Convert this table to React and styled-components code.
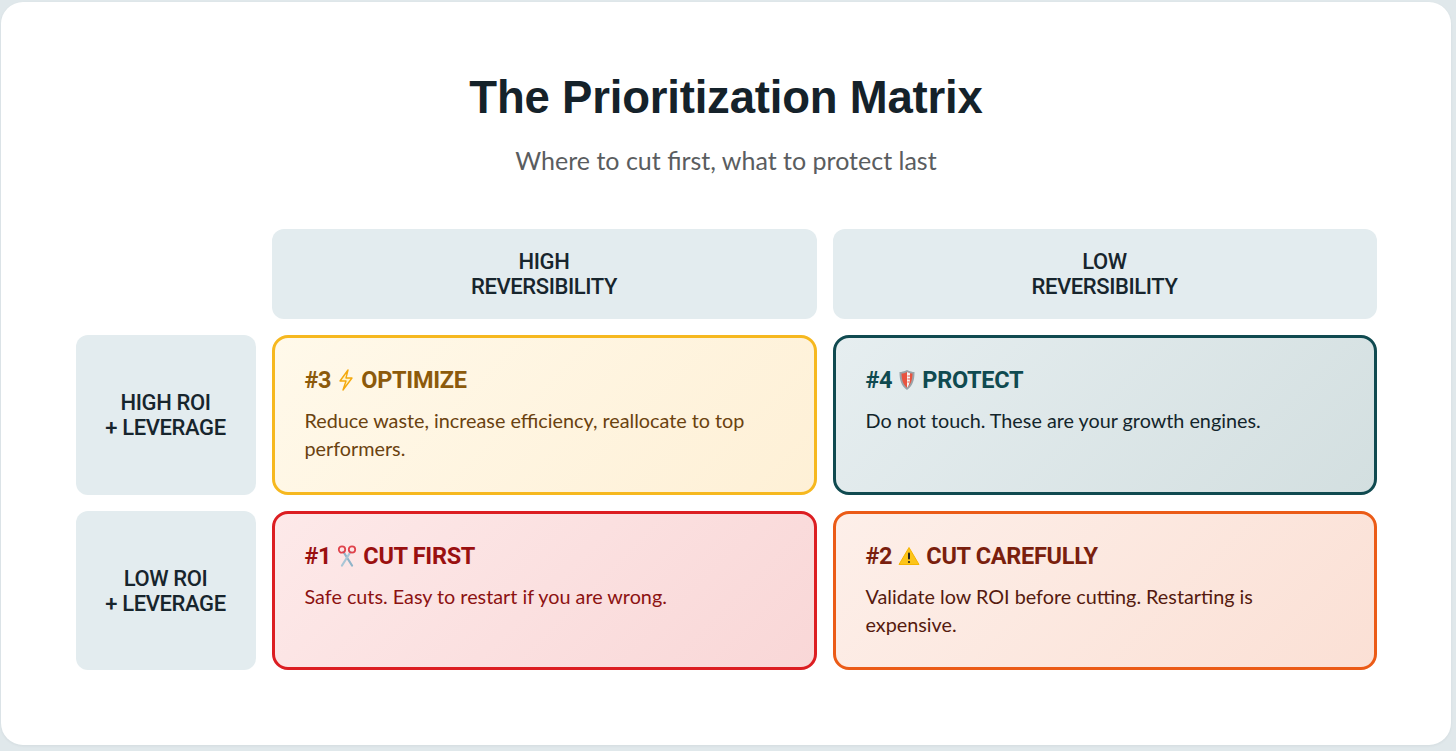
import React from "react";
import styled, { createGlobalStyle } from "styled-components";

const GlobalStyle = createGlobalStyle`
	html, body {
		margin: 0;
		padding: 0;
		background: #e0e8eb;
	}
	* {
		box-sizing: border-box;
	}
`;

const Page = styled.div`
	padding: 2px 5px 6px 1px;
	height: 751px;
`;

const Card = styled.div`
	height: 743px;
	background: #fff;
	border-radius: 22px;
	box-shadow: 0 1px 3px rgba(20, 40, 50, 0.06);
	padding-top: 69px;
	display: flex;
	flex-direction: column;
	align-items: center;
`;

const Title = styled.h1`
	margin: 0;
	font-family: "Liberation Sans", Arial, sans-serif;
	font-weight: 700;
	font-size: 45.5px;
	line-height: 54px;
	letter-spacing: -0.2px;
	color: #15222a;
`;

const Subtitle = styled.p`
	margin: 20px 0 0;
	font-family: Lato, "Open Sans", sans-serif;
	font-size: 25px;
	line-height: 30px;
	color: #5a5d60;
`;

const Matrix = styled.div`
	margin-top: 54px;
	display: grid;
	grid-template-columns: 180px 545px 544px;
	grid-template-rows: 90px 160px 159px;
	gap: 16px;
`;

const Label = styled.div`
	background: #e3ecef;
	border-radius: 12px;
	display: flex;
	align-items: center;
	justify-content: center;
	text-align: center;
	font-family: Roboto, "Liberation Sans", sans-serif;
	font-weight: 500;
	font-size: 22px;
	line-height: 25px;
	letter-spacing: -0.4px;
	color: #17252d;
	white-space: pre-line;
`;

const Quadrant = styled.div`
	border: 3px solid ${(p) => p.$border};
	border-radius: 16px;
	background: linear-gradient(135deg, ${(p) => p.$from}, ${(p) => p.$to});
	padding: 28px 30px 0;
`;

const QuadTitle = styled.h3`
	margin: 0;
	display: flex;
	align-items: center;
	gap: 6px;
	font-family: Roboto, "Liberation Sans", sans-serif;
	font-weight: 700;
	font-size: 23.5px;
	line-height: 28px;
	letter-spacing: -0.3px;
	color: ${(p) => p.$color};
	svg {
		flex: none;
	}
`;

const QuadText = styled.p`
	margin: 12px 0 0;
	font-family: Lato, "Open Sans", sans-serif;
	font-size: 19.8px;
	line-height: 28px;
	color: ${(p) => p.$color};
`;

const Bolt = () => (
	<svg width="18" height="22" viewBox="0 0 18 22">
		<path d="M11 1 L3 12 L9 12 L6 21 L15 9 L9 9 Z" fill="#fff3c4" stroke="#f4a90e" strokeWidth="1.4" strokeLinejoin="round" />
	</svg>
);

const Shield = () => (
	<svg width="18" height="22" viewBox="0 0 18 22">
		<path d="M9 1 C6 2.5 3.5 3 1.5 3 C1.5 11 3 16.5 9 21 C15 16.5 16.5 11 16.5 3 C14.5 3 12 2.5 9 1 Z" fill="#9aa3a8" />
		<path d="M9 3 C7 4 5 4.5 3.5 4.6 C3.7 11 5 15.5 9 18.8 C13 15.5 14.3 11 14.5 4.6 C13 4.5 11 4 9 3 Z" fill="#e8533f" />
		<path d="M9 3 L9 18.8 C10.5 17 12 14 12 10 L12 4.3 C11 4 10 3.5 9 3 Z" fill="#f6f6f6" />
		<path d="M9.5 7 H12 M9.5 10 H12 M9.5 13 H11.5" stroke="#e8533f" strokeWidth="1" />
	</svg>
);

const Scissors = () => (
	<svg width="20" height="22" viewBox="0 0 20 22">
		<path d="M6.5 7 L15 20.5" stroke="#8fb4c9" strokeWidth="2.2" strokeLinecap="round" />
		<path d="M13.5 7 L5 20.5" stroke="#a9c6d6" strokeWidth="2.2" strokeLinecap="round" />
		<circle cx="5" cy="4.5" r="3.2" fill="none" stroke="#e0424b" strokeWidth="1.8" />
		<circle cx="15" cy="4.5" r="3.2" fill="none" stroke="#e0424b" strokeWidth="1.8" />
	</svg>
);

const Warning = () => (
	<svg width="22" height="20" viewBox="0 0 22 20">
		<path d="M11 1.5 L21 18.5 H1 Z" fill="#fcc419" stroke="#f5b400" strokeWidth="1" strokeLinejoin="round" />
		<rect x="10" y="6.5" width="2" height="7" rx="1" fill="#222" />
		<circle cx="11" cy="16" r="1.1" fill="#222" />
	</svg>
);

const quadrants = [
	{
		num: "#3",
		name: "OPTIMIZE",
		icon: <Bolt />,
		text: "Reduce waste, increase efficiency, reallocate to top performers.",
		border: "#f6b81f",
		from: "#fff9ea",
		to: "#fef0d6",
		title: "#8c5a0b",
		body: "#6a420f",
	},
	{
		num: "#4",
		name: "PROTECT",
		icon: <Shield />,
		text: "Do not touch. These are your growth engines.",
		border: "#104a50",
		from: "#e6eef0",
		to: "#d3dfe0",
		title: "#0f4a50",
		body: "#13252b",
	},
	{
		num: "#1",
		name: "CUT FIRST",
		icon: <Scissors />,
		text: "Safe cuts. Easy to restart if you are wrong.",
		border: "#dc1e22",
		from: "#fde9e9",
		to: "#f9d7d7",
		title: "#9a1010",
		body: "#8c1212",
	},
	{
		num: "#2",
		name: "CUT CAREFULLY",
		icon: <Warning />,
		text: "Validate low ROI before cutting. Restarting is expensive.",
		border: "#eb5b17",
		from: "#fdefe9",
		to: "#fbe0d5",
		title: "#7a1f0e",
		body: "#551a0f",
	},
];

function QuadrantCell({ q }) {
	return (
		<Quadrant $border={q.border} $from={q.from} $to={q.to}>
			<QuadTitle $color={q.title}>
				<span>{q.num}</span>
				{q.icon}
				<span>{q.name}</span>
			</QuadTitle>
			<QuadText $color={q.body}>{q.text}</QuadText>
		</Quadrant>
	);
}

export default function App() {
	return (
		<>
			<GlobalStyle />
			<Page>
				<Card>
					<Title>The Prioritization Matrix</Title>
					<Subtitle>Where to cut first, what to protect last</Subtitle>
					<Matrix>
						<div />
						<Label>{"HIGH\nREVERSIBILITY"}</Label>
						<Label>{"LOW\nREVERSIBILITY"}</Label>
						<Label>{"HIGH ROI\n+ LEVERAGE"}</Label>
						<QuadrantCell q={quadrants[0]} />
						<QuadrantCell q={quadrants[1]} />
						<Label>{"LOW ROI\n+ LEVERAGE"}</Label>
						<QuadrantCell q={quadrants[2]} />
						<QuadrantCell q={quadrants[3]} />
					</Matrix>
				</Card>
			</Page>
		</>
	);
}
